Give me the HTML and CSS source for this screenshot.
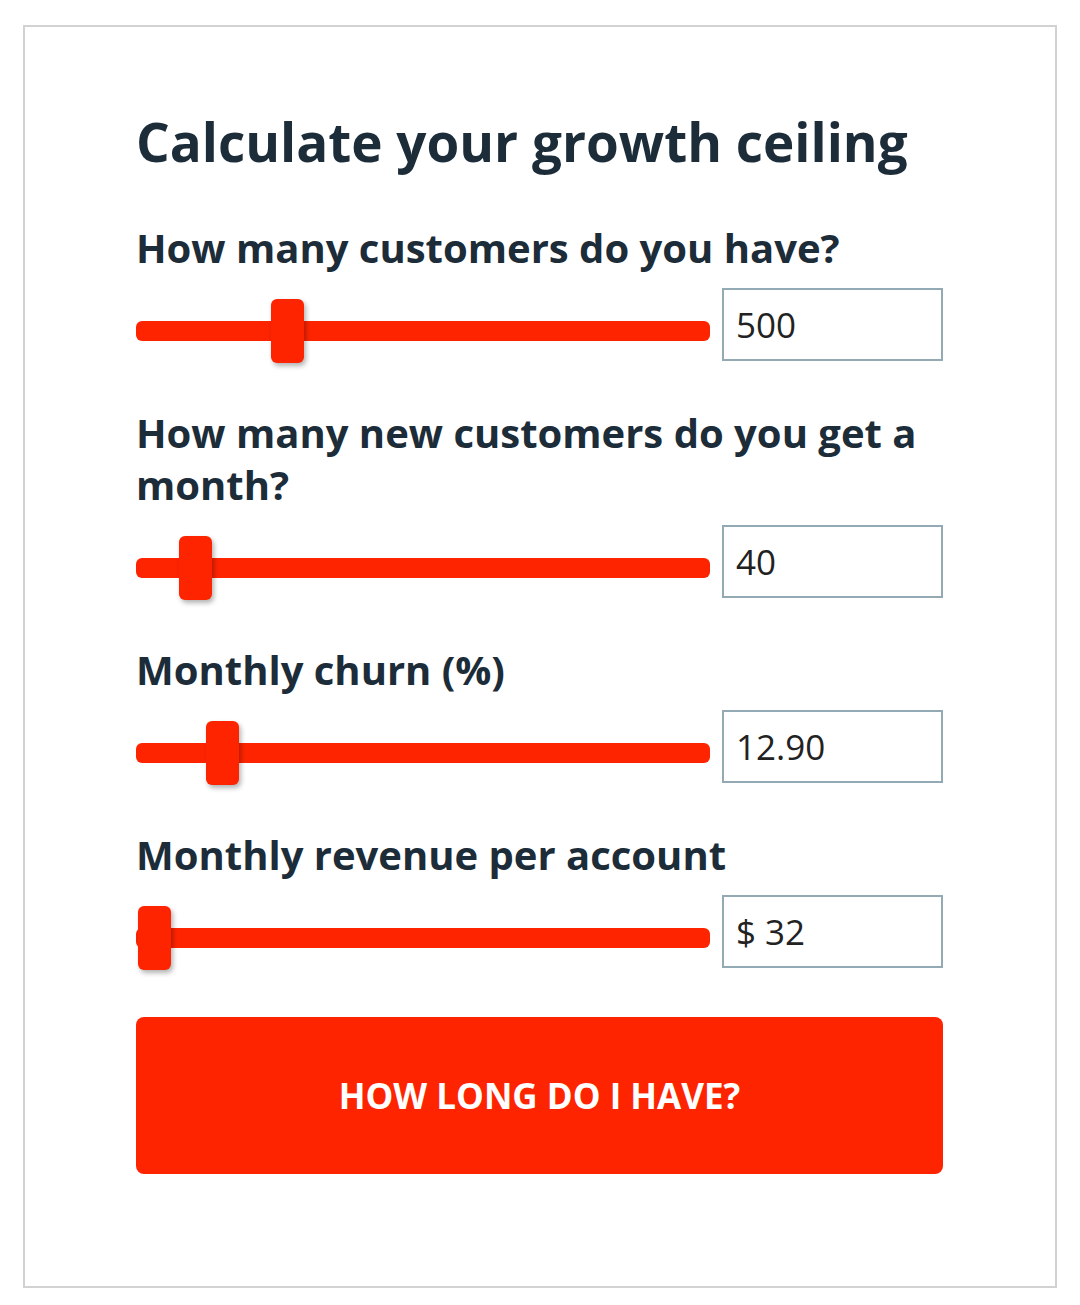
FILE: index.html
```html
<!DOCTYPE html>
<html lang="en">
<head>
  <meta charset="UTF-8">
  <title>Growth ceiling calculator</title>
  <link rel="stylesheet" href="styles.css">
</head>
<body>
<div class="card">
  <h1 class="title">Calculate your growth ceiling</h1>

  <label class="label" for="customers">How many customers do you have?</label>
  <div class="row">
    <input class="slider" type="range" min="0" max="2000" step="1" value="500">
    <input class="field" id="customers" type="text" value="500">
  </div>

  <label class="label" for="new-customers">How many new customers do you get a month?</label>
  <div class="row">
    <input class="slider" type="range" min="0" max="500" step="1" value="40">
    <input class="field" id="new-customers" type="text" value="40">
  </div>

  <label class="label" for="churn">Monthly churn (%)</label>
  <div class="row">
    <input class="slider" type="range" min="0" max="100" step="0.1" value="12.9">
    <input class="field" id="churn" type="text" value="12.90">
  </div>

  <label class="label" for="revenue">Monthly revenue per account</label>
  <div class="row">
    <input class="slider" type="range" min="0" max="10000" step="1" value="32">
    <input class="field" id="revenue" type="text" value="$ 32">
  </div>

  <button class="submit" type="button">How long do I have?</button>
</div>
</body>
</html>
```

FILE: styles.css
```css
* {
  box-sizing: border-box;
}
html, body {
  margin: 0;
  padding: 0;
  background: #fff;
}
body {
  padding: 25px 23px 17px 23px;
  font-family: "Open Sans", "Liberation Sans", sans-serif;
  color: #1c2c38;
}
.card {
  border: 2px solid #d2d2d2;
  padding: 82px 112px 112px 111px;
}
.title {
  margin: 0 0 47px;
  font-size: 53px;
  line-height: 66px;
  font-weight: 700;
  white-space: nowrap;
}
.label {
  display: block;
  font-size: 40px;
  line-height: 52px;
  font-weight: 700;
}
.row {
  display: flex;
  align-items: flex-start;
  gap: 12px;
  height: 73px;
  margin: 14px 0 46px;
}
.slider {
  -webkit-appearance: none;
  appearance: none;
  flex: 1;
  height: 64px;
  margin: 11px 0 0;
  padding: 0;
  background: transparent;
}
.slider::-webkit-slider-runnable-track {
  height: 20px;
  border-radius: 6px;
  background: #ff2400;
}
.slider::-webkit-slider-thumb {
  -webkit-appearance: none;
  width: 33px;
  height: 64px;
  margin-top: -22px;
  border-radius: 6px;
  background: #ff2400;
  box-shadow: 2px 3px 5px rgba(0, 0, 0, 0.3);
}
.field {
  width: 221px;
  height: 73px;
  margin: 0;
  padding: 0 12px;
  border: 2px solid #93a9b4;
  border-radius: 0;
  font-family: "Open Sans", "Liberation Sans", sans-serif;
  font-size: 35px;
  color: #222;
  background: #fff;
}
.submit {
  display: block;
  width: 100%;
  height: 157px;
  margin-top: 49px;
  border: 0;
  border-radius: 8px;
  background: #ff2400;
  color: #fff;
  font-family: "Open Sans", "Liberation Sans", sans-serif;
  font-size: 35px;
  font-weight: 700;
  text-transform: uppercase;
}
```
